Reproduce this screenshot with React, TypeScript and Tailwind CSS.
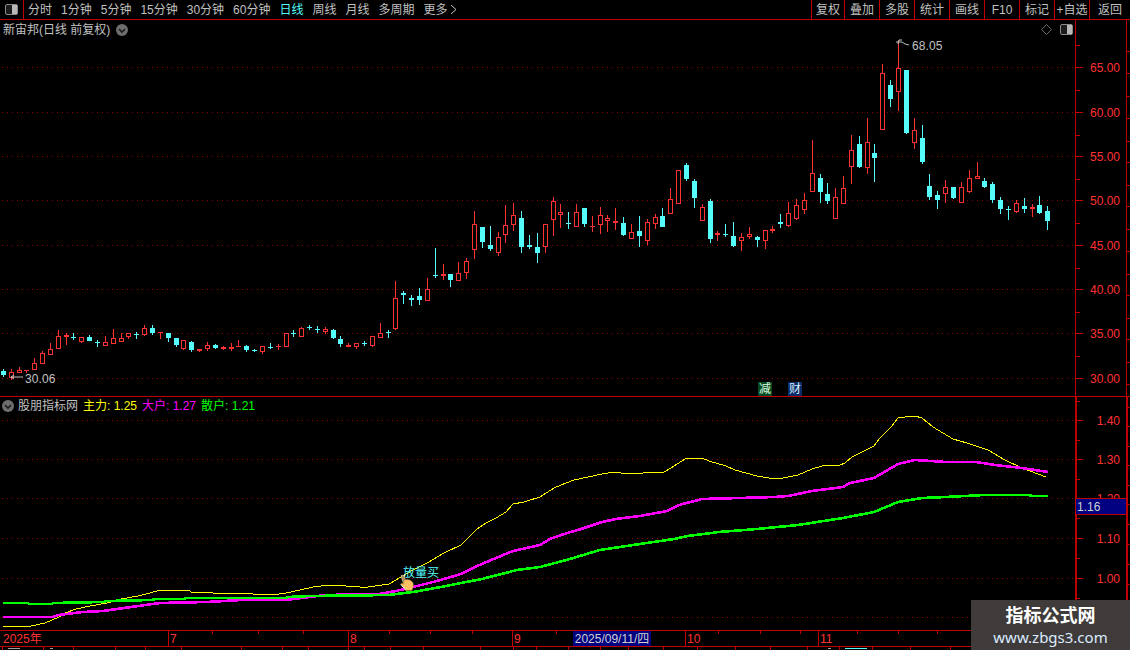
import React from "react";

type Candle = [number, number, number, number, "r" | "c"];

// high, body top, body bottom, low in page pixels
const candles: Candle[] = [
  [369, 371, 375, 377, "c"], [369, 372, 378, 380, "r"], [367, 370, 373, 373, "r"], [370, 370, 371, 373, "r"],
  [358, 363, 370, 370, "r"], [351, 353, 364, 364, "r"], [343, 349, 355, 355, "r"], [330, 336, 349, 349, "r"],
  [333, 335, 337, 345, "r"], [333, 337, 338, 340, "c"], [337, 337, 342, 343, "r"], [335, 337, 341, 341, "c"],
  [340, 342, 343, 347, "c"], [336, 342, 346, 346, "r"], [329, 338, 344, 344, "r"], [333, 338, 342, 342, "r"],
  [333, 333, 337, 339, "r"], [332, 334, 335, 339, "c"], [325, 328, 335, 336, "r"], [325, 328, 333, 335, "c"],
  [332, 332, 333, 339, "r"], [333, 333, 338, 342, "c"], [338, 338, 345, 347, "c"], [340, 340, 349, 350, "r"],
  [341, 342, 350, 352, "c"], [349, 349, 351, 352, "r"], [342, 345, 349, 351, "r"], [344, 345, 348, 349, "c"],
  [346, 347, 349, 350, "r"], [343, 347, 349, 351, "r"], [340, 346, 347, 347, "r"], [345, 346, 350, 352, "c"],
  [349, 350, 351, 352, "c"], [346, 346, 352, 354, "r"], [343, 347, 348, 349, "c"], [344, 346, 347, 350, "r"],
  [333, 333, 347, 347, "r"], [330, 333, 334, 337, "c"], [327, 328, 337, 337, "r"], [325, 327, 328, 330, "c"],
  [326, 329, 330, 333, "c"], [327, 329, 332, 334, "r"], [329, 330, 338, 339, "c"], [336, 339, 344, 347, "c"],
  [343, 345, 347, 347, "r"], [343, 343, 347, 349, "r"], [341, 343, 344, 346, "c"], [336, 336, 346, 347, "r"],
  [323, 333, 338, 338, "r"], [330, 332, 333, 338, "c"], [281, 298, 329, 330, "r"], [291, 293, 295, 304, "c"],
  [295, 298, 300, 306, "c"], [288, 296, 300, 305, "c"], [278, 289, 301, 301, "r"], [248, 275, 276, 278, "c"],
  [264, 274, 276, 280, "r"], [274, 274, 280, 287, "c"], [262, 273, 281, 281, "r"], [258, 261, 273, 279, "r"],
  [211, 224, 250, 259, "r"], [227, 227, 242, 248, "c"], [226, 245, 249, 251, "c"], [232, 237, 253, 256, "r"],
  [205, 225, 235, 243, "r"], [203, 215, 225, 231, "r"], [211, 218, 247, 253, "c"], [235, 245, 247, 249, "c"],
  [233, 247, 253, 263, "c"], [224, 224, 247, 253, "r"], [197, 201, 220, 236, "r"], [204, 212, 215, 228, "r"],
  [212, 223, 224, 229, "c"], [204, 212, 227, 227, "r"], [208, 208, 224, 227, "c"], [216, 226, 227, 232, "r"],
  [207, 215, 225, 234, "r"], [215, 218, 221, 232, "r"], [208, 221, 223, 230, "r"], [217, 223, 235, 236, "c"],
  [224, 232, 239, 239, "r"], [216, 231, 236, 247, "c"], [219, 222, 241, 245, "r"], [214, 217, 224, 229, "r"],
  [208, 216, 227, 227, "c"], [188, 199, 214, 214, "r"], [170, 170, 204, 204, "r"], [163, 165, 179, 181, "c"],
  [179, 181, 198, 208, "c"], [204, 207, 221, 221, "r"], [199, 201, 239, 243, "c"], [231, 233, 235, 241, "r"],
  [224, 234, 235, 237, "c"], [222, 236, 246, 247, "c"], [233, 237, 241, 251, "r"], [227, 234, 237, 239, "r"],
  [236, 237, 240, 247, "c"], [230, 230, 241, 249, "r"], [226, 229, 231, 233, "r"], [214, 222, 224, 228, "c"],
  [202, 213, 226, 227, "r"], [199, 205, 219, 220, "r"], [193, 200, 210, 214, "r"], [140, 173, 192, 192, "r"],
  [174, 178, 192, 203, "c"], [183, 194, 201, 204, "c"], [188, 197, 219, 219, "r"], [176, 188, 204, 204, "r"],
  [135, 150, 167, 184, "r"], [136, 144, 167, 168, "c"], [118, 142, 168, 174, "r"], [144, 153, 158, 182, "c"],
  [64, 73, 130, 130, "r"], [80, 85, 99, 107, "c"], [40, 68, 92, 111, "r"], [70, 70, 133, 134, "c"],
  [118, 130, 143, 149, "r"], [125, 138, 162, 164, "c"], [174, 186, 197, 200, "c"], [191, 195, 200, 209, "c"],
  [180, 187, 194, 203, "r"], [187, 187, 198, 199, "c"], [182, 187, 203, 203, "r"], [170, 178, 192, 193, "r"],
  [162, 176, 179, 179, "r"], [178, 181, 187, 188, "c"], [182, 184, 200, 203, "c"], [197, 200, 209, 214, "c"],
  [206, 209, 210, 220, "c"], [200, 203, 212, 213, "r"], [198, 206, 209, 213, "c"], [204, 207, 209, 217, "r"],
  [196, 205, 213, 214, "c"], [206, 211, 221, 230, "c"],
];

const yellowLine =
  "3,626 31,626 45,623 59,617 65,613 76,609 90,606 107,603 121,599 138,596 150,593 160,590 189,590 191,592 211,592 213,593 243,593 253,594 279,594 286,593 300,590 313,587 329,585 337,585 346,586 360,587 368,587 389,584 401,577 413,570 427,563 444,553 461,545 468,538 477,529 486,523 496,518 506,512 513,504 524,502 540,497 554,488 561,485 574,480 588,477 602,474 614,472 621,473 636,474 643,473 664,472 671,468 685,459 702,458 709,461 726,466 735,470 757,476 769,478 783,478 798,475 812,469 822,466 840,465 845,463 852,457 874,446 879,439 886,432 891,427 898,418 905,417 915,416 922,418 933,427 953,439 967,443 988,450 1005,460 1022,468 1046,477";
const magentaLine =
  "3,617 52,617 59,615 83,612 103,611 131,607 160,603 207,602 241,600 286,600 310,597 326,595 379,594 396,591 413,587 437,581 461,574 475,567 496,558 513,551 540,545 550,539 561,535 581,529 602,522 616,519 640,516 667,511 679,505 702,499 740,498 774,497 788,496 812,491 843,487 850,483 874,478 898,464 915,460 946,462 976,462 995,465 1022,468 1048,472";
const greenLine =
  "3,603 28,603 29,604 52,604 53,603 103,602 107,601 152,600 155,599 184,599 186,598 286,598 288,597 310,596 389,595 413,592 441,587 461,583 482,579 517,570 540,567 570,559 600,550 640,544 674,539 688,536 719,532 757,529 798,525 843,518 874,512 898,502 922,498 946,497 984,495 1029,495 1032,496 1048,496";

const leftTabs = ["分时", "1分钟", "5分钟", "15分钟", "30分钟", "60分钟", "日线", "周线", "月线", "多周期"];
const rightTabs = [
  { label: "复权", w: "w-[33px]" },
  { label: "叠加", w: "w-[35px]" },
  { label: "多股", w: "w-[35px]" },
  { label: "统计", w: "w-[35px]" },
  { label: "画线", w: "w-[35px]" },
  { label: "F10", w: "w-[35px]" },
  { label: "标记", w: "w-[35px]" },
  { label: "+自选", w: "w-[35px]" },
  { label: "返回", w: "w-[41px]" },
];

const priceTicks = [
  { y: 67, t: "65.00" }, { y: 112, t: "60.00" }, { y: 156, t: "55.00" }, { y: 200, t: "50.00" },
  { y: 245, t: "45.00" }, { y: 289, t: "40.00" }, { y: 333, t: "35.00" }, { y: 378, t: "30.00" },
];
const indTicks = [
  { y: 420, t: "1.40" }, { y: 459, t: "1.30" }, { y: 498, t: "1.20" }, { y: 538, t: "1.10" }, { y: 578, t: "1.00" },
];

const months = [
  { x: 1, t: "2025年", line: false }, { x: 168, t: "7", line: true }, { x: 348, t: "8", line: true },
  { x: 512, t: "9", line: true }, { x: 685, t: "10", line: true }, { x: 818, t: "11", line: true },
];
const topTicks = [212, 258, 303, 389, 430, 472, 556, 602, 640, 718, 760, 800, 857, 898, 937];
const lowTicks = [2, 43, 73, 115, 145, 181, 241, 282, 308, 348, 364, 390, 423, 480, 513, 536, 568, 600, 628, 663, 697, 735, 770, 807, 839, 872, 910, 950];

const RED = "#ff3232";
const CYAN = "#54fcfc";

const ToggleIcon = () => (
  <svg width="13" height="11" viewBox="0 0 13 11">
    <rect x="0.5" y="0.5" width="12" height="10" rx="1.5" fill="#1c1c1c" stroke="#8a8a8a" />
    <rect x="7" y="1" width="5" height="9" fill="#b8b8b8" />
  </svg>
);

const ChevronDot = () => (
  <svg width="12" height="12" viewBox="0 0 12 12">
    <circle cx="6" cy="6" r="6" fill="#6e6e6e" />
    <path d="M3 5 L6 8 L9 5" fill="none" stroke="#1a1a1a" strokeWidth="1.6" />
  </svg>
);

const Hand = () => (
  <svg width="14" height="16" viewBox="0 0 14 16">
    <path d="M1 1 C1 -0.2 3.8 -0.2 4.2 1 L6 7 L3.6 9 Z" fill="#b08a58" stroke="#e8d8b8" strokeWidth="0.6" />
    <path
      d="M4 5 L7 4.5 L10 5 L13 7.5 L13.5 11 L12 15.5 L6 15.5 L3 12 L0.8 9.5 L1.5 8 L3.6 9 Z"
      fill="#fbbf62"
      stroke="#8a6a3a"
      strokeWidth="0.5"
    />
    <path d="M6 15.5 L3 12 L0.8 9.5" stroke="#e8e8e8" strokeWidth="1" fill="none" />
  </svg>
);

const CandleMark = ({ c, i }: { c: Candle; i: number }) => {
  const [h, t, b, l, kind] = c;
  const x = Math.floor(3.3 + i * 7.853);
  const color = kind === "r" ? RED : CYAN;
  const solid = kind === "c" || b - t < 3;
  return (
    <g shapeRendering="crispEdges">
      <rect x={x} y={h} width={1} height={l - h} fill={color} />
      {solid ? (
        <rect x={x - 2} y={t} width={5} height={Math.max(b - t, 1)} fill={color} />
      ) : (
        <rect x={x - 1.5} y={t + 0.5} width={4} height={b - t - 1} fill="#000" stroke={color} strokeWidth={1} />
      )}
    </g>
  );
};

const AxisColumn = ({ top, height, ticks, wide }: { top: number; height: number; ticks: { y: number; t: string }[]; wide?: boolean }) => {
  const step = ticks[1].y - ticks[0].y;
  const minor = [...ticks.map((k) => k.y + step / 2), ticks[0].y - step / 2];
  return (
    <div className="relative w-[55px] shrink-0">
      <svg width="55" height={height} viewBox={`0 ${top} 55 ${height}`} className="block" shapeRendering="crispEdges">
        <rect x={0} y={top} width={wide ? 2 : 1} height={height} fill="#c00000" />
        <rect x={51} y={top} width={wide ? 2 : 1} height={height} fill="#c00000" />
        {ticks.map((k) => (
          <rect key={k.y} x={0} y={k.y} width={8} height={1} fill="#c00000" />
        ))}
        {minor.map((y) => (
          <rect key={y} x={0} y={Math.round(y)} width={5} height={1} fill="#c00000" />
        ))}
        {[...ticks.map((k) => k.y), ...minor].map((y) => (
          <rect key={`r${y}`} x={52} y={Math.round(y) + 6} width={3} height={1} fill="#c00000" />
        ))}
      </svg>
      {ticks.map((k) => (
        <span key={k.t} className="absolute right-[10px] text-[12px] leading-[16px] text-[#ff3232]" style={{ top: k.y - top - 7 }}>
          {k.t}
        </span>
      ))}
    </div>
  );
};

const Dotted = ({ y }: { y: number }) => (
  <line x1={2} x2={1075} y1={y + 0.5} y2={y + 0.5} stroke="#8c0000" strokeWidth={1} strokeDasharray="1 4" shapeRendering="crispEdges" />
);

export default function App() {
  return (
    <div className="relative flex h-[650px] w-[1130px] flex-col overflow-hidden bg-black font-['Liberation_Sans','Noto_Sans_CJK_SC',sans-serif] text-[12px] text-[#c0c0c0]">
      {/* top toolbar */}
      <div className="flex h-[20px] shrink-0 items-center border-b border-[#c00000]">
        <div className="flex h-full w-[24px] shrink-0 items-center justify-center border-r border-[#c00000]">
          <ToggleIcon />
        </div>
        <div className="flex flex-1 items-center gap-[9px] pl-[4px]">
          {leftTabs.map((t) => (
            <span key={t} className={t === "日线" ? "text-[#54fcfc]" : ""}>
              {t}
            </span>
          ))}
          <span className="flex items-center gap-[2px]">
            更多
            <svg width="7" height="11" viewBox="0 0 7 11">
              <path d="M1 1 L6 5.5 L1 10" fill="none" stroke="#c0c0c0" />
            </svg>
          </span>
        </div>
        <div className="flex h-full">
          {rightTabs.map((t) => (
            <div key={t.label} className={`flex h-full items-center justify-center whitespace-nowrap border-l border-[#c00000] ${t.w}`}>
              {t.label}
            </div>
          ))}
        </div>
      </div>

      {/* price panel */}
      <div className="flex h-[377px] shrink-0 border-b border-[#c00000]">
        <div className="relative w-[1075px] shrink-0">
          <svg width="1075" height="376" viewBox="0 20 1075 376" className="block">
            {priceTicks.map((k) => (
              <Dotted key={k.y} y={k.y} />
            ))}
            {candles.map((c, i) => (
              <CandleMark key={i} c={c} i={i} />
            ))}
            <path d="M898 44 L899 40 L902 40 M896 42 L902 42 L905 44 L909 45" fill="none" stroke="#c0c0c0" />
            <path d="M11 377 L23 377 M11 377 L14 375 M11 377 L14 379" fill="none" stroke="#c0c0c0" />
            <text x="912" y="50" fontSize="12" letterSpacing="0.1" fill="#c0c0c0">68.05</text>
            <text x="25" y="383" fontSize="12" letterSpacing="0.1" fill="#c0c0c0">30.06</text>
          </svg>
          {/* header overlay */}
          <div className="absolute left-[3px] top-0 flex h-[19px] items-center gap-[6px]">
            <span className="whitespace-nowrap">新宙邦(日线 前复权)</span>
            <ChevronDot />
          </div>
          <div className="absolute right-[2px] top-[4px] flex items-center gap-[8px]">
            <svg width="11" height="11" viewBox="0 0 11 11">
              <path d="M5.5 0.5 L10.5 5.5 L5.5 10.5 L0.5 5.5 Z" fill="none" stroke="#6a6a6a" />
            </svg>
            <ToggleIcon />
          </div>
          <div className="absolute bottom-0 left-[758px] flex gap-[16px] text-[12px] leading-[14px]">
            <span className="w-[14px] bg-[#0a4a22] text-center text-[#d8ffe0]">减</span>
            <span className="w-[14px] bg-[#0a2a68] text-center text-[#d8ecff]">财</span>
          </div>
        </div>
        <AxisColumn top={20} height={376} ticks={priceTicks} />
      </div>

      {/* indicator panel */}
      <div className="flex h-[233px] shrink-0">
        <div className="relative w-[1075px] shrink-0">
          <svg width="1075" height="233" viewBox="0 397 1075 233" className="block">
            {[...indTicks.map((k) => k.y), 617].map((y) => (
              <Dotted key={y} y={y} />
            ))}
            <polyline points={yellowLine} fill="none" stroke="#ffff00" strokeWidth={1} shapeRendering="crispEdges" />
            <polyline points={magentaLine} fill="none" stroke="#ff00ff" strokeWidth={2.6} shapeRendering="crispEdges" />
            <polyline points={greenLine} fill="none" stroke="#00ff00" strokeWidth={2.6} shapeRendering="crispEdges" />
          </svg>
          <div className="absolute left-[2px] top-0 flex h-[18px] items-center whitespace-nowrap">
            <ChevronDot />
            <span className="ml-[4px] w-[65px]">股朋指标网</span>
            <span className="w-[59px] text-[#ffff00]">主力: 1.25</span>
            <span className="w-[59px] text-[#ff00ff]">大户: 1.27</span>
            <span className="text-[#00ff00]">散户: 1.21</span>
          </div>
          <span className="absolute left-[403px] top-[168px] text-[12px] leading-[16px] text-[#54fcfc]">放量买</span>
          <div className="absolute left-[400px] top-[178px]">
            <Hand />
          </div>
        </div>
        <div className="relative">
          <AxisColumn top={397} height={233} ticks={indTicks} wide />
          <div className="absolute left-[1px] top-[101px] flex h-[17px] w-[50px] items-center border-y border-[#c00000] bg-[#000080] pl-[1px] text-[#d0d0d0]">
            1.16
          </div>
        </div>
      </div>

      {/* time axis */}
      <div className="relative h-[17px] shrink-0 border-y border-[#c00000]">
        <svg width="1130" height="15" className="block" shapeRendering="crispEdges">
          {topTicks.map((x) => (
            <rect key={x} x={x} y={0} width={1} height={3} fill="#c00000" />
          ))}
          {months.filter((m) => m.line).map((m) => (
            <rect key={m.x} x={m.x} y={0} width={1} height={15} fill="#c00000" />
          ))}
          <rect x={1075} y={0} width={2} height={15} fill="#c00000" />
        </svg>
        {months.map((m) => (
          <span key={m.t} className="absolute top-[1px] text-[12px] leading-[15px] text-[#ff3232]" style={{ left: m.x + 2 }}>
            {m.t}
          </span>
        ))}
        <div className="absolute left-[573px] top-0 flex h-[15px] w-[78px] items-center justify-center whitespace-nowrap bg-[#000080] text-[#d0d0d0]">
          2025/09/11/四
        </div>
      </div>

      {/* clipped row under the time axis */}
      <svg width="1130" height="3" className="block" shapeRendering="crispEdges">
        {lowTicks.map((x) => (
          <rect key={x} x={x} y={0} width={1} height={3} fill="#c00000" />
        ))}
        <rect x={8} y={1} width={12} height={1} fill="#a0a0a0" />
        <rect x={50} y={1} width={3} height={1} fill="#a0a0a0" />
        <rect x={828} y={1} width={3} height={1} fill="#a0a0a0" />
        <rect x={845} y={1} width={22} height={1} fill="#54fcfc" />
      </svg>

      {/* watermark */}
      <div className="absolute bottom-0 right-0 flex h-[50px] w-[159px] flex-col items-center justify-center bg-[#3f3b3b]">
        <span className="text-[18px] font-bold leading-[24px] text-white">指标公式网</span>
        <span className="font-['Noto_Sans',sans-serif] text-[15px] leading-[18px] text-[#dcecff]">www.zbgs3.com</span>
      </div>
    </div>
  );
}
